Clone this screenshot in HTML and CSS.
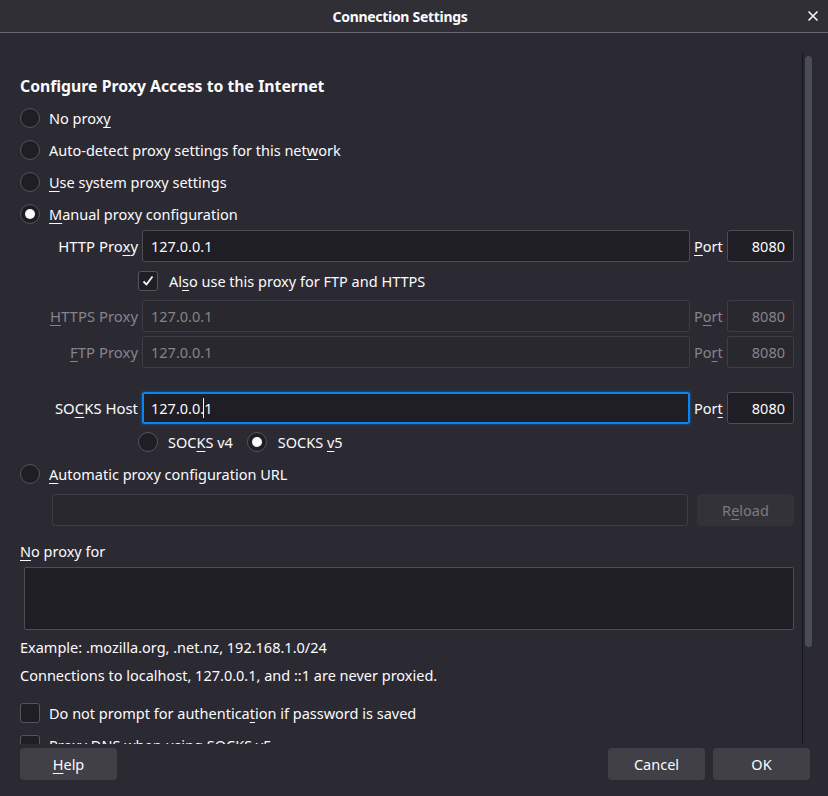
FILE: index.html
```html
<!DOCTYPE html>
<html>
<head>
<meta charset="utf-8">
<link rel="stylesheet" href="styles.css">
</head>
<body>
<div class="titlebar">
  <span class="title">Connection Settings</span>
  <svg class="close" width="12" height="12" viewBox="0 0 12 12"><path d="M1.5 1.5 L10.5 10.5 M10.5 1.5 L1.5 10.5" stroke="#f4f4f6" stroke-width="1.6" fill="none"/></svg>
</div>
<div class="viewport">
  <div class="content">
    <h1 class="heading">Configure Proxy Access to the Internet</h1>
    <div class="radio-row"><span class="radio"></span><span>No prox<u>y</u></span></div>
    <div class="radio-row"><span class="radio"></span><span>Auto-detect proxy settings for this net<u>w</u>ork</span></div>
    <div class="radio-row"><span class="radio"></span><span><u>U</u>se system proxy settings</span></div>
    <div class="radio-row"><span class="radio checked"></span><span><u>M</u>anual proxy configuration</span></div>

    <div class="proxy-grid">
      <span class="lbl">HTTP Pro<u>x</u>y</span>
      <div class="field">127.0.0.1</div>
      <span class="lbl-port"><u>P</u>ort</span>
      <div class="field port">8080</div>

      <div class="also-row">
        <span class="checkbox checked"><svg width="14" height="14" viewBox="0 0 14 14"><path d="M2.5 7.5 L5.5 10.5 L11.5 2.5" stroke="#fbfbfe" stroke-width="1.8" fill="none"/></svg></span>
        <span>Al<u>s</u>o use this proxy for FTP and HTTPS</span>
      </div>

      <span class="lbl disabled"><u>H</u>TTPS Proxy</span>
      <div class="field disabled">127.0.0.1</div>
      <span class="lbl-port disabled">P<u>o</u>rt</span>
      <div class="field port disabled">8080</div>

      <span class="lbl disabled"><u>F</u>TP Proxy</span>
      <div class="field disabled">127.0.0.1</div>
      <span class="lbl-port disabled">Po<u>r</u>t</span>
      <div class="field port disabled">8080</div>

      <div class="spacer"></div>

      <span class="lbl">SO<u>C</u>KS Host</span>
      <div class="field focused">127.0.0.<span class="caret"></span>1</div>
      <span class="lbl-port">Por<u>t</u></span>
      <div class="field port">8080</div>

      <div class="socks-row">
        <span class="radio sm"></span><span class="socks-lbl">SOC<u>K</u>S v4</span>
        <span class="radio sm checked"></span><span>SOCKS <u>v</u>5</span>
      </div>
    </div>

    <div class="radio-row auto"><span class="radio"></span><span><u>A</u>utomatic proxy configuration URL</span></div>
    <div class="url-row">
      <div class="field url"></div>
      <div class="btn disabled-btn">R<u>e</u>load</div>
    </div>

    <div class="noproxy-lbl"><u>N</u>o proxy for</div>
    <div class="textarea"></div>
    <div class="note first">Example: .mozilla.org, .net.nz, 192.168.1.0/24</div>
    <div class="note">Connections to localhost, 127.0.0.1, and ::1 are never proxied.</div>

    <div class="check-row first"><span class="checkbox"></span><span>Do not prompt for authentica<u>t</u>ion if password is saved</span></div>
    <div class="check-row"><span class="checkbox"></span><span>Proxy <u>D</u>NS when using SOCKS v5</span></div>
  </div>
  <div class="scrollbar"><div class="thumb"></div></div>
</div>
<div class="footer">
  <div class="btn"><u>H</u>elp</div>
  <div class="footer-right">
    <div class="btn">Cancel</div>
    <div class="btn">OK</div>
  </div>
</div>
</body>
</html>
```
FILE: styles.css
```css
html, body {
  margin: 0;
  padding: 0;
}
body {
  width: 828px;
  height: 796px;
  overflow: hidden;
  background: #2b2a33;
  color: #fbfbfe;
  font-family: "Noto Sans", "Open Sans", sans-serif;
  font-size: 14.5px;
}
u {
  text-decoration: underline;
  text-underline-offset: 3px;
  text-decoration-thickness: 1px;
}
.titlebar {
  height: 32px;
  border-bottom: 1px solid #6a6970;
  background: #302f36;
  display: flex;
  align-items: center;
  justify-content: center;
  padding-right: 28px;
  box-sizing: content-box;
  position: relative;
}
.title {
  font-weight: bold;
  font-size: 14px;
  letter-spacing: -0.3px;
}
.close {
  position: absolute;
  right: 9px;
  top: 10px;
}
.viewport {
  height: 711px;
  overflow: hidden;
  position: relative;
}
.content {
  padding: 37px 34px 0 20px;
}
.heading {
  margin: 0;
  height: 32px;
  line-height: 32px;
  font-size: 15.8px;
  font-weight: bold;
}
.radio-row {
  height: 32px;
  display: flex;
  align-items: center;
  gap: 9px;
}
.radio {
  width: 18px;
  height: 18px;
  border: 1px solid #55545c;
  border-radius: 50%;
  background: #1f1e25;
  flex: none;
  position: relative;
}
.radio.checked::after {
  content: "";
  position: absolute;
  left: 4px;
  top: 4px;
  width: 10px;
  height: 10px;
  border-radius: 50%;
  background: #fbfbfe;
}
.proxy-grid {
  margin-left: 28px;
  display: grid;
  grid-template-columns: 90px 1fr 29px 67px;
  grid-template-rows: 32px 30px 32px 32px 16px 32px 28px;
  column-gap: 4px;
  row-gap: 4px;
  align-items: center;
}
.lbl {
  text-align: right;
  white-space: nowrap;
  font-size: 14.9px;
}
.lbl-port {
  white-space: nowrap;
}
.disabled {
  color: #85848b;
}
.field {
  border: 1px solid #4e4d55;
  border-radius: 3px;
  background: #1f1e24;
  display: flex;
  align-items: center;
  padding: 0 8px;
  box-sizing: border-box;
  height: 32px;
  white-space: nowrap;
}
.field.disabled {
  background: #29282f;
  border-color: #3e3d44;
}
.field.port {
  justify-content: flex-end;
}
.field.focused {
  border: 2px solid #0b84f3;
  box-shadow: 0 0 0 1.5px #1e3d60;
  padding-left: 7px;
}
.caret {
  display: inline-block;
  width: 1px;
  height: 20px;
  background: #fbfbfe;
  margin: 0 0 0 -1px;
}
.also-row {
  grid-column: 2 / 5;
  height: 30px;
  margin-left: -4px;
  display: flex;
  align-items: center;
  gap: 11px;
}
.checkbox {
  width: 18px;
  height: 18px;
  border: 1px solid #55545c;
  border-radius: 3px;
  background: #1f1e25;
  flex: none;
  display: flex;
  align-items: center;
  justify-content: center;
}
.spacer {
  grid-column: 1 / 5;
  height: 16px;
  align-self: start;
}
.socks-row {
  grid-column: 2 / 5;
  margin-left: -4px;
  display: flex;
  align-items: center;
  height: 28px;
  gap: 10px;
}
.socks-lbl {
  margin-right: 2px;
}
.socks-row .radio.sm.checked {
  margin-left: 2px;
}
.socks-row .radio.sm.checked + span {
  margin-left: 1px;
}
.radio-row.auto {
  margin-top: 2px;
}
.url-row {
  margin-top: 4px;
  margin-left: 32px;
  display: flex;
  gap: 9px;
}
.field.url {
  flex: 1;
  background: #29282f;
  border-color: #3e3d44;
}
.btn {
  width: 97px;
  height: 32px;
  border-radius: 4px;
  background: #414047;
  display: flex;
  align-items: center;
  justify-content: center;
  box-sizing: border-box;
}
.disabled-btn {
  background: #333238;
  color: #7b7a81;
}
.noproxy-lbl {
  margin-top: 14px;
  height: 22px;
  line-height: 22px;
}
.textarea {
  margin-top: 5px;
  margin-left: 4px;
  height: 63px;
  border: 1px solid #4e4d55;
  border-radius: 2px;
  background: #1f1e24;
  box-sizing: border-box;
}
.note {
  height: 20px;
  line-height: 20px;
  margin-top: 8px;
}
.note.first {
  margin-top: 7px;
}
.check-row {
  display: flex;
  align-items: center;
  gap: 9px;
  height: 24px;
  margin-top: 8px;
}
.check-row.first {
  margin-top: 16px;
}
.scrollbar {
  position: absolute;
  left: 802px;
  top: 20px;
  width: 11px;
  bottom: 0;
  border-left: 1px solid #17161b;
  background: #282935;
}
.thumb {
  position: absolute;
  left: 2px;
  top: 3px;
  width: 7px;
  height: 591px;
  border-radius: 4px;
  background: #4a4c56;
}
.footer {
  height: 52px;
  display: flex;
  justify-content: space-between;
  padding: 4px 18px 0 20px;
  box-sizing: border-box;
}
.footer-right {
  display: flex;
  gap: 8px;
}
```
